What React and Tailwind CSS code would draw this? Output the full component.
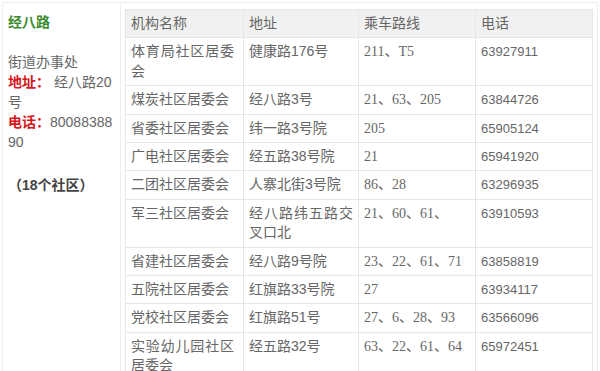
import React from "react";

const rows = [
  ["体育局社区居委会", "健康路176号", "211、T5", "63927911"],
  ["煤炭社区居委会", "经八路3号", "21、63、205", "63844726"],
  ["省委社区居委会", "纬一路3号院", "205", "65905124"],
  ["广电社区居委会", "经五路38号院", "21", "65941920"],
  ["二团社区居委会", "人寨北街3号院", "86、28", "63296935"],
  ["军三社区居委会", "经八路纬五路交叉口北", "21、60、61、", "63910593"],
  ["省建社区居委会", "经八路9号院", "23、22、61、71", "63858819"],
  ["五院社区居委会", "红旗路33号院", "27", "63934117"],
  ["党校社区居委会", "红旗路51号", "27、6、28、93", "63566096"],
  ["实验幼儿园社区居委会", "经五路32号", "63、22、61、64", "65972451"],
];

const sans = "font-['Liberation_Sans','Noto_Sans_CJK_SC',sans-serif]";
const serif = "font-['Liberation_Serif','Noto_Sans_CJK_SC',serif]";

export default function App() {
  const td = "border border-[#e6e6e6] pl-[5px] pt-[4px] pb-[4px] align-top text-justify leading-[19.4px]";
  return (
    <div className={`w-[600px] h-[371px] overflow-hidden bg-white text-[14px] ${sans}`}>
      <div className="mt-[2px] mx-[2px] flex border-t border-l border-r border-[#eeeeee] h-[400px]">
        <div className="w-[118px] shrink-0 border-r border-[#eeeeee] pl-[5px] pr-[2px] pt-[9px] leading-[20px] text-[#666]">
          <div className="font-bold text-[#3c8b2e]">经八路</div>
          <div className="mt-[20px]">街道办事处</div>
          <div>
            <span className="font-bold text-[#d6161c]">地址：</span> 经八路20
            <br />号
          </div>
          <div>
            <span className="font-bold text-[#d6161c]">电话：</span>80088388
            <br />90
          </div>
          <div className="mt-[23px] font-bold text-[#444]">（18个社区）</div>
        </div>
        <div className="flex-1 pl-[4px] pr-[3px] pt-[6px]">
          <table className="table-fixed border-collapse w-[467px] text-[#666]">
            <colgroup>
              <col className="w-[118px]" />
              <col className="w-[115px]" />
              <col className="w-[117px]" />
              <col className="w-[117px]" />
            </colgroup>
            <thead>
              <tr className="bg-[#f1f1f1]">
                <td className={td}>机构名称</td>
                <td className={td}>地址</td>
                <td className={td}>乘车路线</td>
                <td className={td}>电话</td>
              </tr>
            </thead>
            <tbody>
              {rows.map((r, i) => (
                <tr key={i}>
                  <td className={`${td} pr-[9px]`}>{r[0]}</td>
                  <td className={`${td} pr-[5px]`}>{r[1]}</td>
                  <td className={`${td} pr-[5px] ${serif}`}>{r[2]}</td>
                  <td className={`${td} pr-[5px] text-[13px]`}>{r[3]}</td>
                </tr>
              ))}
            </tbody>
          </table>
        </div>
      </div>
    </div>
  );
}
